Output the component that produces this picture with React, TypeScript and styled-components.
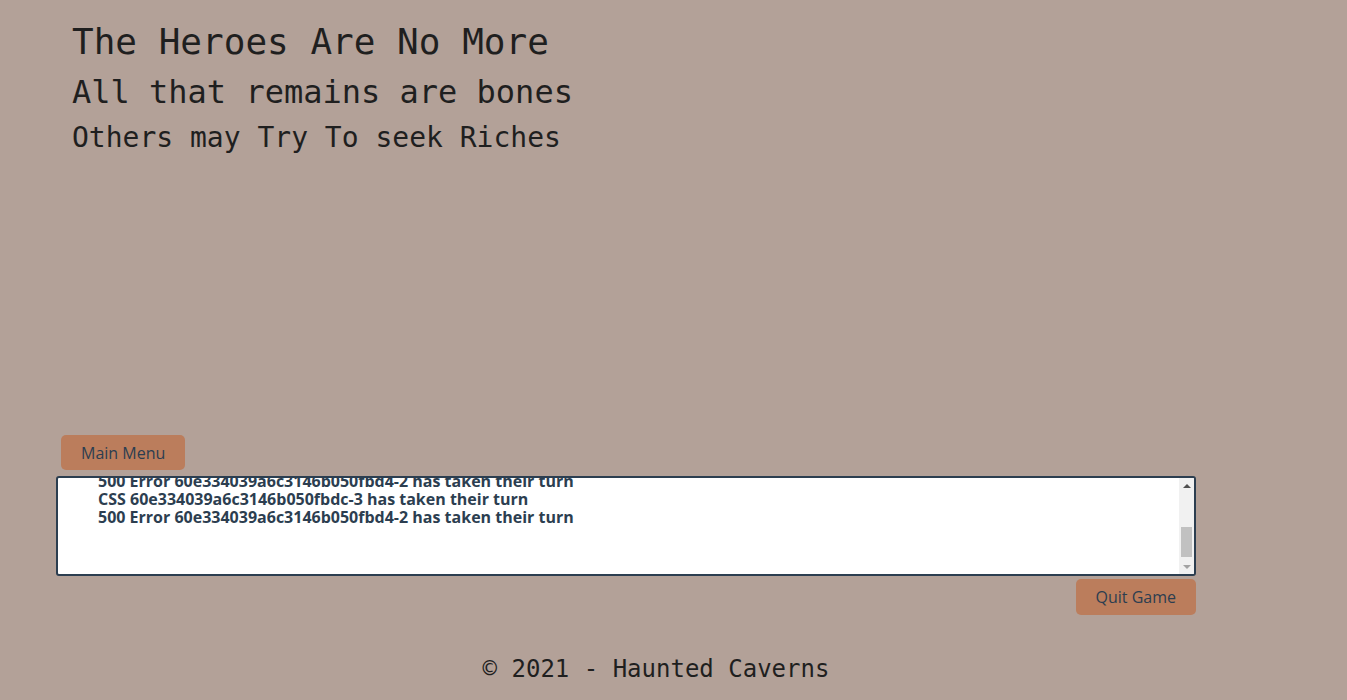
import React from 'react';
import styled, { createGlobalStyle } from 'styled-components';

const GlobalStyle = createGlobalStyle`
    html, body {
        margin: 0;
        padding: 0;
        background: #b3a198;
        overflow: hidden;
    }
`;

const log = [
    '500 Error 60e334039a6c3146b050fbd4-2 has taken their turn',
    'CSS 60e334039a6c3146b050fbdc-3 has taken their turn',
    '500 Error 60e334039a6c3146b050fbd4-2 has taken their turn',
];

const App: React.FC = () => {
    return (
        <Page>
            <GlobalStyle />
            <Game>
                <Story>
                    <Line size={36} lh={52}>The Heroes Are No More</Line>
                    <Line size={32} lh={48}>All that remains are bones</Line>
                    <Line size={28} lh={44}>Others may Try To seek Riches</Line>
                </Story>

                <Button>Main Menu</Button>

                <LogBox>
                    <LogView>
                        <LogList>
                            {log.map((entry, i) => (
                                <li key={i}>{entry}</li>
                            ))}
                        </LogList>
                    </LogView>
                    <Scrollbar>
                        <Arrow dir="up" />
                        <Track>
                            <Thumb />
                        </Track>
                        <Arrow dir="down" />
                    </Scrollbar>
                </LogBox>

                <Actions>
                    <Button>Quit Game</Button>
                </Actions>
            </Game>

            <Footer>© 2021 - Haunted Caverns</Footer>
        </Page>
    );
};

const Page = styled.div`
    height: 700px;
    display: flex;
    flex-direction: column;
    font-family: 'DejaVu Sans Mono', monospace;
    color: #1f1f1f;
`;

const Game = styled.main`
    width: 1140px;
    padding-left: 56px;
    display: flex;
    flex-direction: column;
`;

const Story = styled.section`
    height: 435px;
    padding: 16px 0 0 16px;
    box-sizing: border-box;
    display: flex;
    flex-direction: column;
`;

const Line = styled.div<{ size: number; lh: number }>`
    font-size: ${(p) => p.size}px;
    line-height: ${(p) => p.lh}px;
    white-space: nowrap;
`;

const Button = styled.button`
    align-self: flex-start;
    margin-left: 5px;
    height: 35px;
    padding: 0 20px;
    border: none;
    border-radius: 5px;
    background: #bb7d5c;
    color: #2c3e50;
    font-family: 'Open Sans', sans-serif;
    font-size: 16px;
    cursor: pointer;
`;

const LogBox = styled.div`
    margin-top: 6px;
    height: 100px;
    box-sizing: border-box;
    border: 2px solid #2c3e50;
    border-radius: 3px;
    background: #fff;
    display: flex;
    overflow: hidden;
`;

const LogView = styled.div`
    flex: 1;
    overflow: hidden;
`;

const LogList = styled.ul`
    margin: -6px 0 0;
    padding: 0 0 0 40px;
    list-style: none;
    font-family: 'Open Sans', sans-serif;
    font-weight: 700;
    font-size: 16px;
    line-height: 18px;
    color: #2c3e50;
`;

const Scrollbar = styled.div`
    width: 15px;
    background: #f1f1f1;
    display: flex;
    flex-direction: column;
`;

const Arrow = styled.div<{ dir: 'up' | 'down' }>`
    height: 15px;
    display: flex;
    align-items: center;
    justify-content: center;

    &::before {
        content: '';
        width: 0;
        height: 0;
        border-left: 4px solid transparent;
        border-right: 4px solid transparent;
        ${(p) =>
            p.dir === 'up'
                ? 'border-bottom: 4px solid #505050;'
                : 'border-top: 4px solid #a3a3a3;'}
    }
`;

const Track = styled.div`
    flex: 1;
    display: flex;
    flex-direction: column;
    justify-content: flex-end;
    padding: 0 2px 2px;
`;

const Thumb = styled.div`
    height: 30px;
    background: #c1c1c1;
`;

const Actions = styled.div`
    display: flex;
    justify-content: flex-end;
    margin-top: 3px;

    button {
        align-self: auto;
        height: 36px;
    }
`;

const Footer = styled.footer`
    width: 1312px;
    margin-top: 38px;
    text-align: center;
    font-size: 24px;
    line-height: 32px;
`;

export default App;
